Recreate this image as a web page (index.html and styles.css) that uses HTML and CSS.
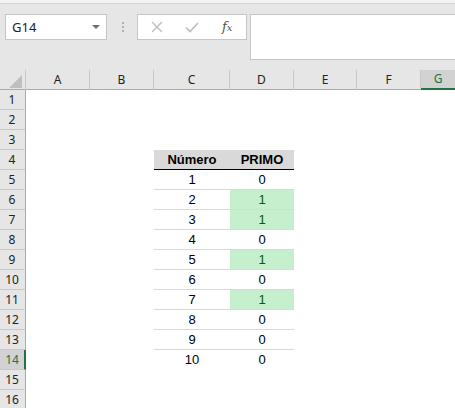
FILE: index.html
```html
<!DOCTYPE html>
<html>
<head>
<meta charset="utf-8">
<link rel="stylesheet" href="styles.css">
</head>
<body>
<div class="app">
  <div class="topstrip"></div>
  <div class="toolbar">
    <div class="namebox">
      <span class="nb-text">G14</span>
      <svg class="nb-arrow" width="8" height="5" viewBox="0 0 8 5"><polygon points="0,0 8,0 4,4" fill="#6e6e6e"/></svg>
    </div>
    <div class="dots"><i></i><i></i><i></i></div>
    <div class="fxbox">
      <svg class="ico-x" width="12" height="12" viewBox="0 0 12 12"><path d="M1 1 L11 11 M11 1 L1 11" stroke="#bdbdbd" stroke-width="1.4" fill="none"/></svg>
      <svg class="ico-check" width="14" height="11" viewBox="0 0 14 11"><path d="M1 5.5 L5 9.5 L13 1" stroke="#bdbdbd" stroke-width="1.6" fill="none"/></svg>
      <span class="fx">f<span class="fx-x">x</span></span>
    </div>
    <div class="formula"></div>
  </div>
  <div class="sheet">
    <div class="hrow">
      <div class="corner"><svg width="13" height="13" viewBox="0 0 13 13"><polygon points="13,0 13,13 0,13" fill="#bfbfbf"/></svg></div>
      <div class="ch">A</div>
      <div class="ch">B</div>
      <div class="ch">C</div>
      <div class="ch">D</div>
      <div class="ch">E</div>
      <div class="ch">F</div>
      <div class="ch sel">G</div>
    </div>
    <div class="row"><div class="rh">1</div></div>
    <div class="row"><div class="rh">2</div></div>
    <div class="row"><div class="rh">3</div></div>
    <div class="row"><div class="rh">4</div><div class="cell c th">Número</div><div class="cell d th">PRIMO</div></div>
    <div class="row"><div class="rh">5</div><div class="cell c ln">1</div><div class="cell d ln">0</div></div>
    <div class="row"><div class="rh">6</div><div class="cell c ln">2</div><div class="cell d ln good">1</div></div>
    <div class="row"><div class="rh">7</div><div class="cell c ln">3</div><div class="cell d ln good">1</div></div>
    <div class="row"><div class="rh">8</div><div class="cell c ln">4</div><div class="cell d ln">0</div></div>
    <div class="row"><div class="rh">9</div><div class="cell c ln">5</div><div class="cell d ln good">1</div></div>
    <div class="row"><div class="rh">10</div><div class="cell c ln">6</div><div class="cell d ln">0</div></div>
    <div class="row"><div class="rh">11</div><div class="cell c ln">7</div><div class="cell d ln good">1</div></div>
    <div class="row"><div class="rh">12</div><div class="cell c ln">8</div><div class="cell d ln">0</div></div>
    <div class="row"><div class="rh">13</div><div class="cell c ln">9</div><div class="cell d ln">0</div></div>
    <div class="row"><div class="rh sel">14</div><div class="cell c">10</div><div class="cell d">0</div></div>
    <div class="row"><div class="rh">15</div></div>
    <div class="row"><div class="rh">16</div></div>
  </div>
</div>
</body>
</html>
```

FILE: styles.css
```css
* { box-sizing: border-box; }
html, body { margin: 0; padding: 0; background: #ffffff; }
body { font-family: "Noto Sans", "DejaVu Sans", sans-serif; }
.app { width: 455px; height: 408px; overflow: hidden; background: #ffffff; }

.topstrip { height: 4px; background: #f3f3f3; border-bottom: 1px solid #d4d4d4; }
.toolbar {
  height: 66px;
  background: #e6e6e6;
  display: flex;
  align-items: flex-start;
  padding: 10px 0 0 5px;
}
.namebox {
  width: 102px; height: 26px;
  background: #fff;
  border: 1px solid #c6c6c6;
  display: flex; align-items: center; justify-content: space-between;
  padding: 0 6px 0 6px;
}
.nb-text { font-size: 13px; color: #222; line-height: 24px; }
.nb-arrow { margin-top: 1px; }
.dots { margin-left: 15px; margin-top: 8px; width: 2px; display: flex; flex-direction: column; gap: 2px; }
.dots i { display: block; width: 2px; height: 2px; background: #b0b0b0; }
.fxbox {
  margin-left: 13px;
  width: 110px; height: 26px;
  background: #fff;
  border: 1px solid #c6c6c6;
  display: flex; align-items: center;
}
.ico-x { margin-left: 13px; }
.ico-check { margin-left: 22px; }
.fx {
  margin-left: 23px;
  font-family: "DejaVu Serif", "Liberation Serif", serif;
  font-style: italic;
  font-size: 13px;
  color: #555;
  line-height: 1;
  margin-top: -2px;
}
.fx-x { font-size: 10px; }
.formula {
  margin-left: 3px;
  flex: 1 0 auto;
  margin-right: -20px;
  height: 46px;
  background: #fff;
  border: 1px solid #c6c6c6;
}

.sheet { background: #fff; }
.hrow, .row {
  display: grid;
  grid-template-columns: 26px 64px 64px 76px 64px 63px 64px 1fr;
  height: 20px;
}
.hrow { background: #e6e6e6; border-bottom: 1px solid #ababab; height: 20px; }
.corner {
  border-right: 1px solid #c8c8c8;
  display: flex; align-items: flex-end; justify-content: flex-end;
  padding: 0 3px 2px 0;
}
.ch {
  border-right: 1px solid #c8c8c8;
  text-align: center;
  font-size: 12px;
  line-height: 19px;
  color: #222;
}
.ch.sel { background: #d2d2d2; border-bottom: 2px solid #217346; border-right: none; color: #217346; line-height: 18px; }

.rh {
  grid-column: 1;
  background: #e6e6e6;
  border-right: 1px solid #ababab;
  border-bottom: 1px solid #c8c8c8;
  text-align: center;
  font-size: 12px;
  line-height: 19px;
  color: #222;
  padding-right: 1px;
}
.rh.sel { background: #d2d2d2; border-right: 2px solid #217346; color: #217346; padding-right: 0; }

.cell {
  font-family: "Liberation Sans", Arial, sans-serif;
  font-size: 13px;
  line-height: 19px;
  text-align: center;
  color: #000;
  height: 20px;
}
.c { grid-column: 4; }
.d { grid-column: 5; }
.th { background: #d9d9d9; font-weight: bold; border-bottom: 1px solid #000; }
.ln { border-bottom: 1px solid #d9d9d9; }
.good { background: #c6efce; color: #006100; }
```
